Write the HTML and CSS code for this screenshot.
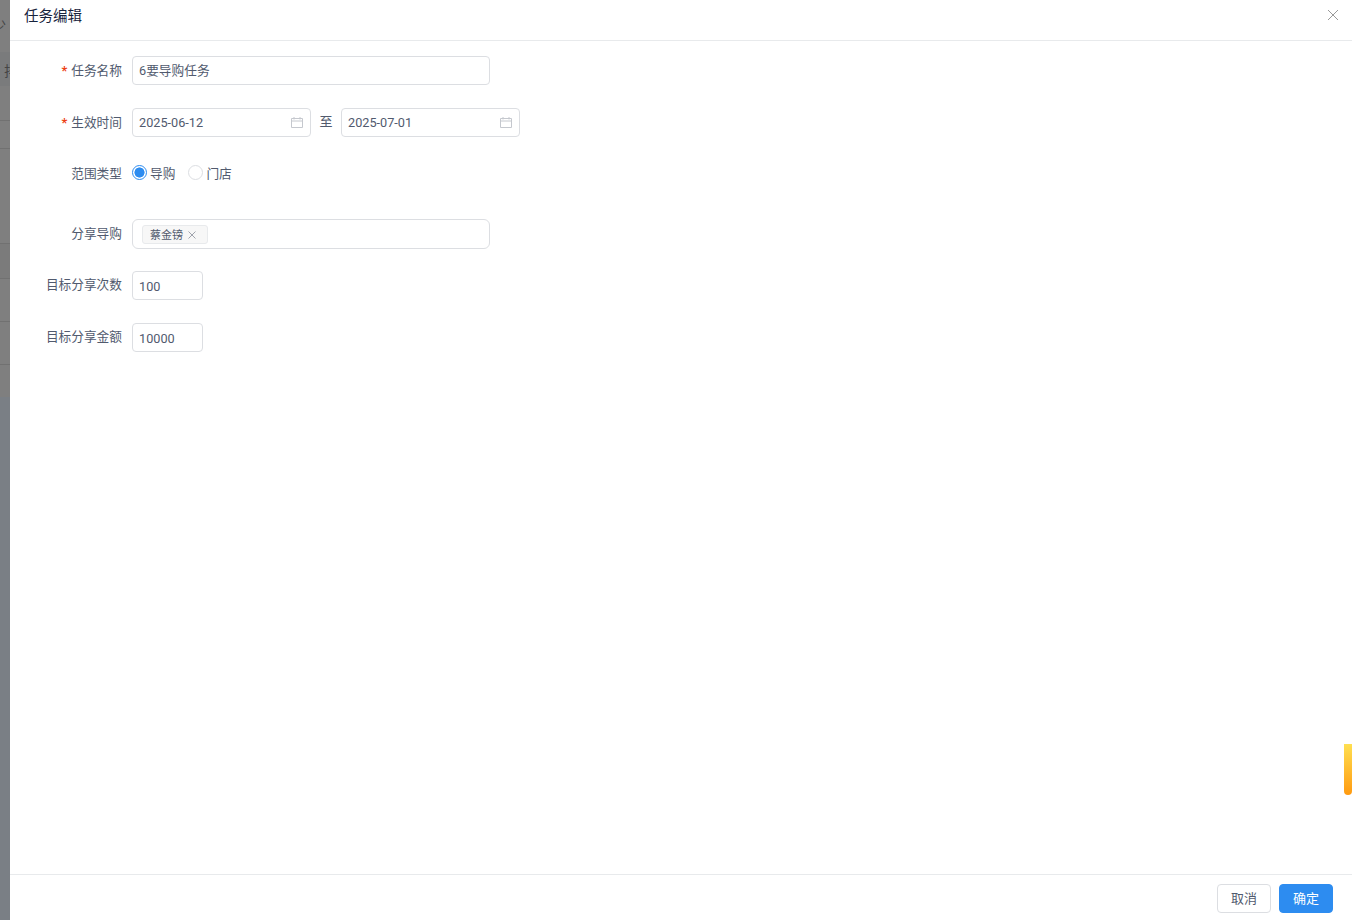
FILE: index.html
```html
<!DOCTYPE html>
<html lang="zh-CN">
<head>
<meta charset="utf-8">
<title>任务编辑</title>
<link rel="stylesheet" href="styles.css">
</head>
<body>
<div class="page">
  <aside class="backdrop">
    <span class="bd-glyph bd-glyph-a">少</span>
    <span class="bd-band"></span>
    <span class="bd-band2"></span>
    <span class="bd-foot"></span>
    <span class="bd-glyph bd-glyph-b">排</span>
    <span class="bd-line l1"></span>
    <span class="bd-line l2"></span>
    <span class="bd-line l3"></span>
    <span class="bd-line l4"></span>
    <span class="bd-line l5"></span>
    <span class="bd-line l6"></span>
  </aside>
  <section class="drawer">
    <header class="drawer-head">
      <h1 class="drawer-title">任务编辑</h1>
      <svg class="close" width="10" height="10" viewBox="0 0 10 10"><path d="M0 0l10 10M10 0L0 10" stroke="#999" stroke-width="1" fill="none"/></svg>
    </header>
    <main class="drawer-body">
      <div class="row row-name">
        <label class="label label-shift"><span class="req">*</span>任务名称</label>
        <div class="input w-358">6要导购任务</div>
      </div>
      <div class="row row-date">
        <label class="label label-shift"><span class="req">*</span>生效时间</label>
        <div class="input w-179 date">2025-06-12
          <svg class="cal" width="12" height="12" viewBox="0 0 12 12"><path d="M.5 2.500h11v9H.5zM.5 5h11M3 1v2.500M9 1v2.500" stroke="#c5c8ce" fill="none"/></svg>
        </div>
        <span class="to">至</span>
        <div class="input w-179 date">2025-07-01
          <svg class="cal" width="12" height="12" viewBox="0 0 12 12"><path d="M.5 2.500h11v9H.5zM.5 5h11M3 1v2.500M9 1v2.500" stroke="#c5c8ce" fill="none"/></svg>
        </div>
      </div>
      <div class="row row-radio">
        <label class="label">范围类型</label>
        <div class="radios">
          <span class="radio on"><i class="dot"></i>导购</span>
          <span class="radio"><i class="dot"></i>门店</span>
        </div>
      </div>
      <div class="row row-share">
        <label class="label label-shift">分享导购</label>
        <div class="input w-358 tags">
          <span class="tag"><span class="tag-text">蔡金镑</span>
            <svg width="8" height="8" viewBox="0 0 8 8"><path d="M.5.500l7 7M7.500.5l-7 7" stroke="#a0a4ad" fill="none"/></svg>
          </span>
        </div>
      </div>
      <div class="row row-num">
        <label class="label">目标分享次数</label>
        <div class="input w-71 num">100</div>
      </div>
      <div class="row row-num">
        <label class="label">目标分享金额</label>
        <div class="input w-71 num">10000</div>
      </div>
    </main>
    <footer class="drawer-foot">
      <button class="btn">取消</button>
      <button class="btn primary">确定</button>
    </footer>
    <span class="handle"></span>
  </section>
</div>
</body>
</html>
```
FILE: styles.css
```css
* { box-sizing: border-box; }
html, body { margin: 0; height: 100%; overflow: hidden; }
body { font-family: Roboto, "Noto Sans CJK SC", sans-serif; font-size: 12.700px; color: #515a6e; }
.page { display: flex; height: 920px; width: 1352px; }
.backdrop { position: relative; width: 10px; flex: none; background: #7f7f7f; overflow: hidden; }
.bd-line { position: absolute; left: 0; right: 0; height: 1px; background: #717171; }
.l1 { top: 120px; } .l2 { top: 148px; } .l3 { top: 243px; } .l4 { top: 278px; } .l5 { top: 321px; } .l6 { top: 364px; }
.bd-band { position: absolute; left: 0; right: 0; top: 52px; height: 34px; background: #7a7b7c; }
.bd-band2 { position: absolute; left: 0; right: 0; top: 244px; height: 34px; background: #7b7b7b; }
.bd-foot { position: absolute; left: 0; right: 0; top: 397px; bottom: 0; background: #7a7f85; }
.bd-glyph { position: absolute; color: #454545; font-size: 14px; line-height: 16px; }
.bd-glyph-a { left: -8px; top: 17px; }
.bd-glyph-b { left: 4px; top: 63px; }
.drawer { position: relative; flex: 1; display: flex; flex-direction: column; background: #fff; }
.drawer-head { height: 41px; flex: none; display: flex; justify-content: space-between; align-items: flex-start; padding: 9px 14px 0 14px; border-bottom: 1px solid #e8eaec; }
.drawer-title { margin: 0; font-size: 14.500px; font-weight: 400; line-height: 16px; color: #17233d; }
.close { margin-top: 1px; }
.drawer-body { flex: 1; padding-top: 15px; }
.row { display: flex; align-items: flex-start; }
.row-name { height: 52px; }
.row-date { height: 52px; }
.row-radio { height: 59px; }
.row-share { height: 52px; }
.row-num { height: 52px; }
.label { width: 122px; flex: none; padding-right: 10px; text-align: right; line-height: 28px; color: #515a6e; white-space: nowrap; }
.label-shift { line-height: 30px; }
.req { color: #ed4014; margin-right: 4px; font-weight: 700; }
.input { height: 29px; border: 1px solid #dcdee2; border-radius: 4px; padding: 0 6px; line-height: 27px; color: #515a6e; background: #fff; position: relative; white-space: nowrap; }
.num { line-height: 29px; }
.w-358 { width: 358px; }
.w-179 { width: 179px; }
.w-71 { width: 71px; }
.cal { position: absolute; right: 7px; top: 7px; }
.to { width: 30px; text-align: center; line-height: 27px; color: #515a6e; font-size: 13px; }
.radios { display: flex; gap: 13px; height: 27px; align-items: center; margin-top: -1px; }
.radio { display: flex; align-items: center; gap: 3px; color: #515a6e; }
.dot { width: 15px; height: 15px; border-radius: 50%; border: 1px solid #dcdee2; background: #fff; display: block; }
.on .dot { border-color: #2d8cf0; background: radial-gradient(circle, #2d8cf0 0 4.800px, #fff 5.300px); }
.tags { height: 30px; padding: 5px 9px; border-radius: 6px; }
.tag { display: inline-flex; align-items: center; gap: 5px; height: 19px; padding: 0 11px 0 7px; background: #f7f7f7; border: 1px solid #e8eaec; border-radius: 3px; font-size: 11px; line-height: 17px; color: #515a6e; vertical-align: top; }
.tag-text { padding-top: 2px; }
.drawer-foot { height: 46px; flex: none; border-top: 1px solid #e8eaec; display: flex; justify-content: flex-end; gap: 8px; padding: 9px 19px 0 0; }
.btn { width: 54px; height: 29px; padding: 0 0 2px; border: 1px solid #dcdee2; border-radius: 4px; background: #fff; color: #515a6e; font: inherit; font-size: 13px; }
.btn.primary { background: #2d8cf0; border-color: #2d8cf0; color: #fff; }
.handle { position: absolute; right: 0; top: 744px; width: 8px; height: 51px; background: linear-gradient(#ffdf50, #ff9a10); border-radius: 0 0 4px 4px; }
```
